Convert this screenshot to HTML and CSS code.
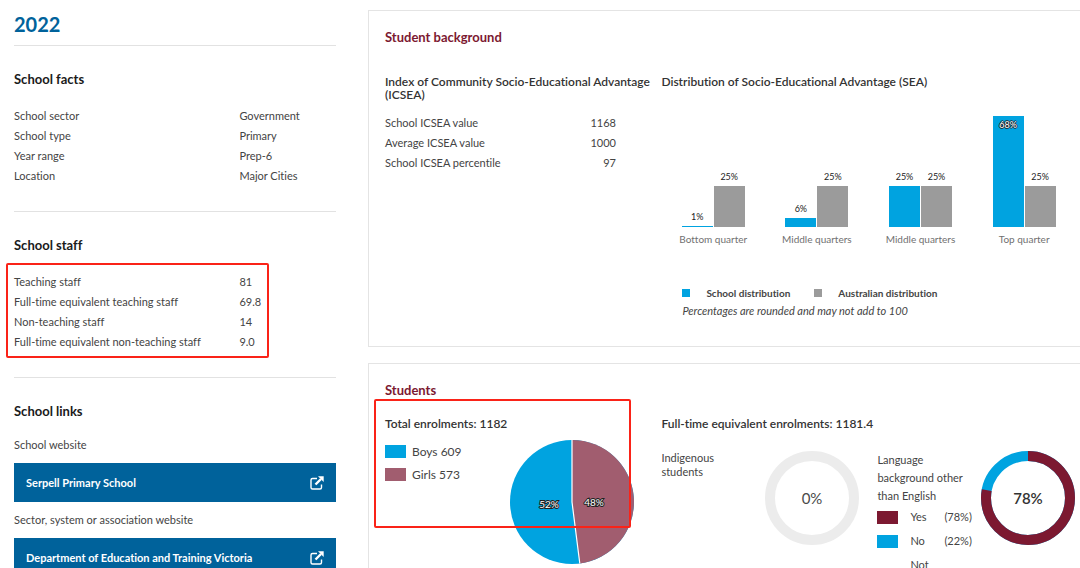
FILE: index.html
```
<!DOCTYPE html>
<html lang="en">
<head>
    <meta charset="UTF-8">
    <meta name="viewport" content="width=device-width, initial-scale=1.0">
    <title>School Profile</title>

    <link rel="stylesheet" href="styles.css">
</head>
<body>
<div class="page">
    <aside class="sidebar">
        <h1>2022</h1>

        <section class="facts">
            <h2>School facts</h2>
            <table class="fact-table">
                <tr><th scope="row">School sector</th><td>Government</td></tr>
                <tr><th scope="row">School type</th><td>Primary</td></tr>
                <tr><th scope="row">Year range</th><td>Prep-6</td></tr>
                <tr><th scope="row">Location</th><td>Major Cities</td></tr>
            </table>
        </section>

        <section class="facts">
            <h2>School staff</h2>
            <div class="marked marked-staff">
                <table class="fact-table">
                    <tr><th scope="row">Teaching staff</th><td>81</td></tr>
                    <tr><th scope="row">Full-time equivalent teaching staff</th><td>69.8</td></tr>
                    <tr><th scope="row">Non-teaching staff</th><td>14</td></tr>
                    <tr><th scope="row">Full-time equivalent non-teaching staff</th><td>9.0</td></tr>
                </table>
            </div>
        </section>

        <section class="facts links">
            <h2>School links</h2>
            <p>School website</p>
            <a class="link-button" href="#school">
                <span>Serpell Primary School</span>
                <svg class="icon" viewBox="0 0 14 14" aria-hidden="true">
                    <path d="M7 2.5H2.5a1.5 1.5 0 0 0-1.5 1.5v7.5A1.5 1.5 0 0 0 2.5 13H10a1.5 1.5 0 0 0 1.5-1.5V8.5" fill="none" stroke="currentColor" stroke-width="1.4"/>
                    <path d="M5.5 8.5L11 3" fill="none" stroke="currentColor" stroke-width="2.4"/>
                    <path d="M8 0.3H13.7V6Z" fill="currentColor"/>
                </svg>
            </a>
            <p>Sector, system or association website</p>
            <a class="link-button" href="#sector">
                <span>Department of Education and Training Victoria</span>
                <svg class="icon" viewBox="0 0 14 14" aria-hidden="true">
                    <path d="M7 2.5H2.5a1.5 1.5 0 0 0-1.5 1.5v7.5A1.5 1.5 0 0 0 2.5 13H10a1.5 1.5 0 0 0 1.5-1.5V8.5" fill="none" stroke="currentColor" stroke-width="1.4"/>
                    <path d="M5.5 8.5L11 3" fill="none" stroke="currentColor" stroke-width="2.4"/>
                    <path d="M8 0.3H13.7V6Z" fill="currentColor"/>
                </svg>
            </a>
        </section>
    </aside>

    <main class="content">
        <section class="panel background">
            <h2>Student background</h2>
            <div class="columns">
                <div>
                    <h3>Index of Community Socio-Educational Advantage (ICSEA)</h3>
                    <table class="icsea-table">
                        <tr><th scope="row">School ICSEA value</th><td>1168</td></tr>
                        <tr><th scope="row">Average ICSEA value</th><td>1000</td></tr>
                        <tr><th scope="row">School ICSEA percentile</th><td>97</td></tr>
                    </table>
                </div>
                <div>
                    <h3>Distribution of Socio-Educational Advantage (SEA)</h3>
                    <!-- bar heights are a share of a 70% axis -->
                    <div class="chart">
                        <div class="group">
                            <div class="bars">
                                <div class="bar-slot"><span>1%</span><div class="bar school" style="height: 1%"></div></div>
                                <div class="bar-slot"><span>25%</span><div class="bar australia" style="height: 36%"></div></div>
                            </div>
                            <div class="group-name">Bottom quarter</div>
                        </div>
                        <div class="group">
                            <div class="bars">
                                <div class="bar-slot"><span>6%</span><div class="bar school" style="height: 8%"></div></div>
                                <div class="bar-slot"><span>25%</span><div class="bar australia" style="height: 36%"></div></div>
                            </div>
                            <div class="group-name">Middle quarters</div>
                        </div>
                        <div class="group">
                            <div class="bars">
                                <div class="bar-slot"><span>25%</span><div class="bar school" style="height: 36%"></div></div>
                                <div class="bar-slot"><span>25%</span><div class="bar australia" style="height: 36%"></div></div>
                            </div>
                            <div class="group-name">Middle quarters</div>
                        </div>
                        <div class="group">
                            <div class="bars">
                                <div class="bar-slot"><div class="bar school" style="height: 97%"><span class="outlined">68%</span></div></div>
                                <div class="bar-slot"><span>25%</span><div class="bar australia" style="height: 36%"></div></div>
                            </div>
                            <div class="group-name">Top quarter</div>
                        </div>
                    </div>
                    <div class="chart-legend">
                        <span class="key"><i class="dot school"></i>School distribution</span>
                        <span class="key"><i class="dot australia"></i>Australian distribution</span>
                    </div>
                    <p class="note">Percentages are rounded and may not add to 100</p>
                </div>
            </div>
        </section>

        <section class="panel students">
            <h2>Students</h2>
            <div class="columns">
                <div class="marked marked-total">
                    <h3>Total enrolments: 1182</h3>
                    <div class="enrolments">
                        <ul class="pie-legend">
                            <li><i class="swatch school"></i>Boys 609</li>
                            <li><i class="swatch girls"></i>Girls 573</li>
                        </ul>
                        <svg class="pie" viewBox="0 0 126 126" role="img" aria-label="Boys 52%, girls 48%">
                            <circle cx="63" cy="63" r="62" fill="#00a3e0"/>
                            <path d="M63 63V1A62 62 0 0 1 70.8 124.5Z" fill="#a15d6f"/>
                            <path d="M63 1V63L70.8 124.5" fill="none" stroke="#fff" stroke-width="1.2"/>
                            <text class="outlined" x="40" y="69" text-anchor="middle">52%</text>
                            <text class="outlined" x="85" y="67" text-anchor="middle">48%</text>
                        </svg>
                    </div>
                </div>
                <div>
                    <h3>Full-time equivalent enrolments: 1181.4</h3>
                    <div class="rings">
                        <div class="ring-name">Indigenous students</div>
                        <svg class="ring" viewBox="0 0 94 94" role="img" aria-label="Indigenous students 0%">
                            <circle cx="47" cy="47" r="42" fill="none" stroke="#ececec" stroke-width="10"/>
                            <text x="47" y="53" text-anchor="middle">0%</text>
                        </svg>
                        <div class="language">
                            <p>Language background other than English</p>
                            <table class="language-table">
                                <tr><td><i class="swatch yes"></i></td><th scope="row">Yes</th><td>(78%)</td></tr>
                                <tr><td><i class="swatch school"></i></td><th scope="row">No</th><td>(22%)</td></tr>
                                <tr><td></td><th scope="row">Not</th><td></td></tr>
                            </table>
                        </div>
                        <svg class="ring strong" viewBox="0 0 94 94" role="img" aria-label="Language background other than English 78%">
                            <circle cx="47" cy="47" r="42" fill="none" stroke="#00a3e0" stroke-width="10"/>
                            <circle cx="47" cy="47" r="42" fill="none" stroke="#7c1931" stroke-width="10" pathLength="100" stroke-dasharray="78 22" transform="rotate(-90 47 47)"/>
                            <text x="47" y="53" text-anchor="middle">78%</text>
                        </svg>
                    </div>
                </div>
            </div>
        </section>
    </main>
</div>
</body>
</html>
```

FILE: styles.css
```
*, *::after {
    box-sizing: border-box;
}

body {
    margin: 0;
    font-family: Lato, sans-serif;
    font-size: 11px;
    line-height: 20px;
    font-variant-ligatures: none;
    color: #444;
    background-color: #fff;
}

h1, h2, h3, p, ul {
    margin: 0;
    padding: 0;
}

table {
    border-collapse: collapse;
}

th, td {
    padding: 0;
    font-weight: normal;
    text-align: left;
}

.page {
    display: grid;
    grid-template-columns: 322px minmax(0, 1fr);
    gap: 32px;
    padding: 10px 0 0 14px;
}

/* left column */
.sidebar h1 {
    padding-bottom: 7px;
    border-bottom: 1px solid #e2e2e2;
    font-size: 20px;
    line-height: 28px;
    color: #00629b;
}

.facts {
    padding: 23px 0 25px;
    border-bottom: 1px solid #e2e2e2;
}

.facts h2 {
    margin-bottom: 17px;
    font-size: 13px;
    line-height: 20px;
    color: #1a1a1a;
}

.fact-table {
    width: 100%;
}

.fact-table th {
    width: 70%;
}

.links {
    border-bottom: none;
    padding-bottom: 0;
}

.links h2 {
    margin-bottom: 14px;
}

.link-button {
    display: flex;
    justify-content: space-between;
    align-items: center;
    height: 39px;
    margin: 8px 0;
    padding: 0 12px;
    background-color: #00629b;
    color: #fff;
    font-weight: bold;
    text-decoration: none;
}

.icon {
    width: 14px;
    height: 14px;
}

/* red outlines drawn over the figures */
.marked {
    position: relative;
}

.marked::after {
    content: "";
    position: absolute;
    border: 2px solid #fa2318;
    border-radius: 2px;
    pointer-events: none;
}

.marked-staff::after {
    top: -9px;
    left: -8px;
    width: 263px;
    height: 95px;
}

.marked-total::after {
    top: -18px;
    left: -11px;
    width: 257px;
    height: 129px;
}

/* panels */
.panel {
    padding: 16px 4px 0 16px;
    border: 1px solid #e4e4e4;
    border-right: none;
}

.panel h2 {
    font-size: 13px;
    line-height: 20px;
    color: #7c1931;
}

.panel h3 {
    font-size: 12px;
    line-height: 13px;
    font-weight: 600;
    color: #333;
}

.columns {
    display: grid;
    grid-template-columns: 2fr 3fr;
}

.background {
    margin-bottom: 16px;
    padding-bottom: 27px;
}

.background .columns {
    margin-top: 28px;
}

.icsea-table {
    width: 231px;
    margin-top: 12px;
}

.icsea-table td {
    text-align: right;
}

/* bar chart */
.chart {
    display: grid;
    grid-template-columns: repeat(4, 1fr);
    margin-top: 25px;
}

.bars {
    display: flex;
    justify-content: center;
    gap: 1px;
    height: 114px;
}

.bar-slot {
    display: flex;
    flex-direction: column;
    justify-content: flex-end;
    width: 31px;
    font-size: 9px;
    line-height: 18px;
    text-align: center;
    color: #222;
}

.bar {
    flex-shrink: 0;
    min-height: 1px;
}

.school {
    background-color: #00a3e0;
}

.australia {
    background-color: #9b9b9b;
}

.girls {
    background-color: #a15d6f;
}

.yes {
    background-color: #7c1931;
}

.outlined {
    color: #fff;
    fill: #fff;
    stroke: #222;
    stroke-width: 2px;
    paint-order: stroke;
    text-shadow: 1px 0 #222, -1px 0 #222, 0 1px #222, 0 -1px #222;
}

.group-name {
    margin-top: 3px;
    font-size: 10px;
    line-height: 18px;
    text-align: center;
    color: #707070;
}

.chart-legend {
    display: flex;
    gap: 24px;
    margin: 35px 0 0 21px;
    font-size: 10px;
    line-height: 20px;
    font-weight: bold;
}

.key {
    display: flex;
    align-items: center;
    gap: 16px;
}

.dot {
    width: 8px;
    height: 8px;
}

.note {
    margin-left: 21px;
    line-height: 16px;
    font-style: italic;
}

/* students */
.students .columns {
    margin-top: 17px;
}

.enrolments {
    display: flex;
    justify-content: space-between;
    margin-top: 9px;
}

.pie-legend {
    margin-top: 1px;
    list-style-type: none;
    font-size: 12px;
    line-height: 23px;
}

.pie-legend li {
    display: flex;
    align-items: center;
    gap: 6px;
}

.swatch {
    display: block;
    width: 21px;
    height: 13px;
}

.pie {
    width: 126px;
    height: 126px;
    margin-right: 26px;
    font-size: 10px;
}

.pie .outlined {
    text-shadow: none;
}

.rings {
    display: grid;
    grid-template-columns: 104px 94px 122px 94px;
    margin-top: 21px;
}

.ring-name {
    width: 70px;
    line-height: 14px;
}

.ring {
    width: 94px;
    height: 94px;
    font-size: 15px;
    fill: #4a4a4a;
}

.strong {
    font-weight: 600;
    fill: #333;
}

.language {
    padding-left: 18px;
    line-height: 18px;
}

.language-table td,
.language-table th {
    height: 24px;
}

.language-table th {
    padding-left: 12px;
    width: 46px;
}
```
